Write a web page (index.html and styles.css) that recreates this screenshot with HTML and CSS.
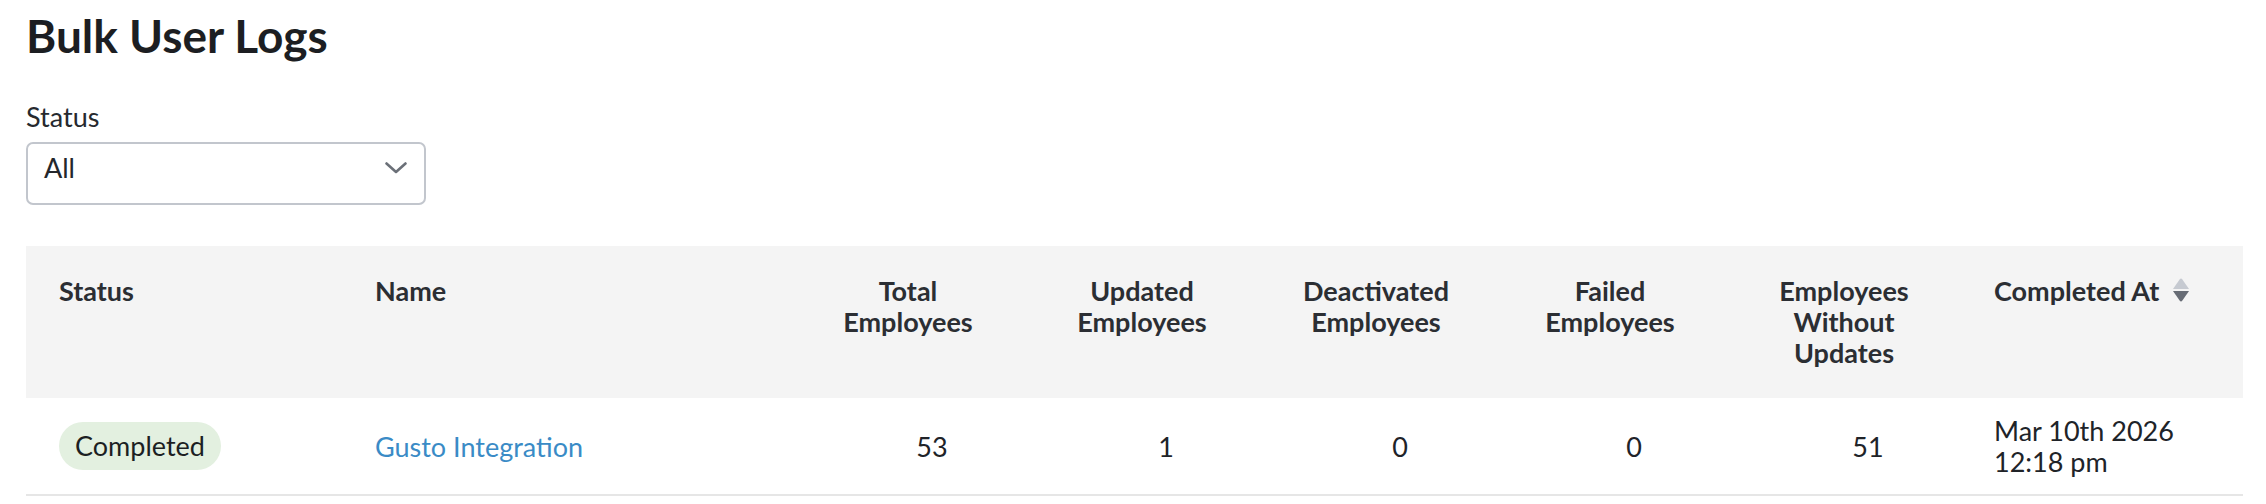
FILE: index.html
```html
<!DOCTYPE html>
<html lang="en">
<head>
<meta charset="utf-8">
<title>Bulk User Logs</title>
<link rel="stylesheet" href="styles.css">
</head>
<body>
<main class="page">
  <h1 class="title">Bulk User Logs</h1>
  <div class="filter">
    <label class="filter-label">Status</label>
    <div class="select">
      <span class="select-value">All</span>
      <svg class="chevron" width="22" height="12" viewBox="0 0 22 12" aria-hidden="true"><path d="M1.5 1.5 L11 10 L20.5 1.5" fill="none" stroke="#6b7078" stroke-width="2.6" stroke-linecap="round" stroke-linejoin="round"/></svg>
    </div>
  </div>
  <table class="logs">
    <colgroup>
      <col class="c-status"><col class="c-name"><col class="c-num"><col class="c-num"><col class="c-num"><col class="c-num"><col class="c-num"><col class="c-date">
    </colgroup>
    <thead>
      <tr>
        <th>Status</th>
        <th>Name</th>
        <th class="num">Total<br>Employees</th>
        <th class="num">Updated<br>Employees</th>
        <th class="num">Deactivated<br>Employees</th>
        <th class="num">Failed<br>Employees</th>
        <th class="num">Employees<br>Without<br>Updates</th>
        <th>Completed At<svg class="sort" width="18" height="24" viewBox="0 0 18 24" aria-hidden="true"><path d="M1 11 L7.6 1.4 Q9 -0.4 10.4 1.4 L17 11 Z" fill="#c6cad1"/><path d="M1 13 L17 13 L10.4 22.6 Q9 24.4 7.6 22.6 Z" fill="#676c75"/></svg></th>
      </tr>
    </thead>
    <tbody>
      <tr>
        <td><span class="badge">Completed</span></td>
        <td><a class="link" href="#">Gusto Integration</a></td>
        <td class="num">53</td>
        <td class="num">1</td>
        <td class="num">0</td>
        <td class="num">0</td>
        <td class="num">51</td>
        <td>Mar 10th 2026<br>12:18 pm</td>
      </tr>
    </tbody>
  </table>
</main>
</body>
</html>
```
FILE: styles.css
```css
html, body {
  margin: 0;
  padding: 0;
  background: #ffffff;
}

body {
  font-family: "Lato", "Noto Sans", sans-serif;
  font-size: 27px;
  line-height: 31px;
  color: #202328;
}

.page {
  padding: 8px 24px 0 26px;
}

.title {
  margin: 0;
  font-size: 46px;
  line-height: 55px;
  font-weight: 700;
  color: #1c1e22;
}

.filter {
  margin-top: 38px;
  display: flex;
  flex-direction: column;
  align-items: flex-start;
}

.filter-label {
  display: block;
  color: #26292e;
}

.select {
  margin-top: 10px;
  width: 400px;
  height: 63px;
  box-sizing: border-box;
  border: 2px solid #c2c6cd;
  border-radius: 7px;
  padding: 8px 17px 20px 16px;
  display: flex;
  align-items: center;
  justify-content: space-between;
}

.select-value {
  color: #24272c;
}

.chevron {
  display: block;
}

.logs {
  margin-top: 41px;
  width: 2216px;
  border-collapse: collapse;
  table-layout: fixed;
}

.c-status { width: 316px; }
.c-name { width: 449px; }
.c-num { width: 234px; }
.c-date { width: 282px; }

.logs th {
  background: #f4f4f4;
  padding: 29px 33px 30px;
  text-align: left;
  vertical-align: top;
  font-weight: 700;
  color: #2b2e33;
}

.logs th.num {
  text-align: center;
}

.sort {
  display: inline-block;
  margin-left: 13px;
  margin-top: 3px;
  vertical-align: top;
}

.logs td {
  padding: 17px 33px;
  border-bottom: 2px solid #e6e6e6;
  vertical-align: middle;
  color: #202328;
}

.logs td.num {
  text-align: center;
  padding-left: 81px;
}

.badge {
  display: inline-block;
  height: 48px;
  line-height: 48px;
  padding: 0 16px;
  border-radius: 24px;
  background: #e3f0e0;
  color: #1c1f23;
}

.link {
  color: #3a8bc6;
  text-decoration: none;
}
```
